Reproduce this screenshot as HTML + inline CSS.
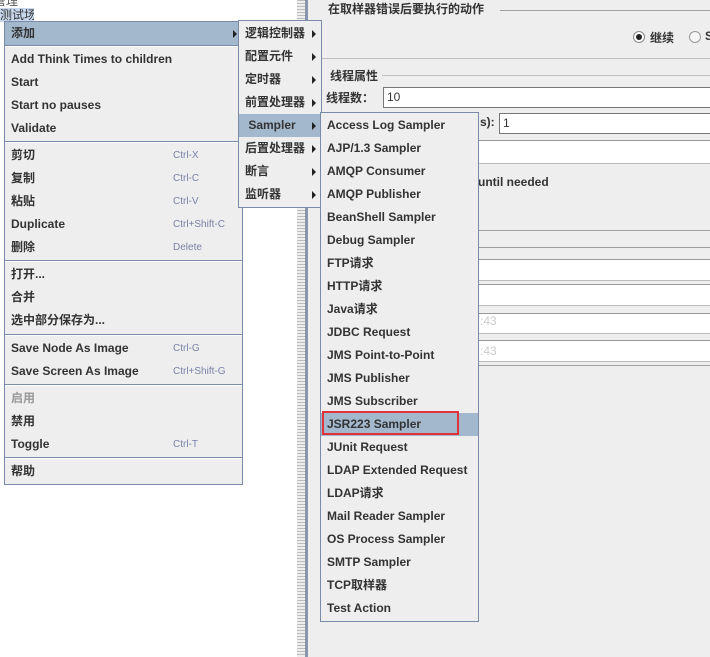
<!DOCTYPE html>
<html><head><meta charset="utf-8"><style>
*{margin:0;padding:0;box-sizing:border-box}
body{width:710px;height:657px;position:relative;overflow:hidden;background:#fff;font-family:"Liberation Sans","Noto Sans CJK SC",sans-serif;font-size:12px;color:#333;font-weight:bold}
.a{position:absolute;white-space:nowrap}
.menu{position:absolute;background:#eeeeee;border:1px solid #7a8aa8}
.it{position:absolute;left:0;right:0;height:23px;line-height:23px;padding-left:6px;white-space:nowrap}
.hl{background:#a3b8cc}
.sc{position:absolute;left:168px;font-weight:normal;font-size:10px;color:#7a82a8}
.sep{position:absolute;left:0;right:0;height:2px;border-top:1px solid #7a8aa8;background:#fff}
.arr{position:absolute;right:5px;top:8px;width:0;height:0;border-left:4px solid #222;border-top:4px solid transparent;border-bottom:4px solid transparent}
.hline{position:absolute;height:1px;background:#a0a0a0}
.box{position:absolute;background:#fff;border-top:1px solid #999;border-bottom:1px solid #bbb}
.dis{color:#999}
</style></head><body>
<div class="a" style="left:-6px;top:-8px;font-weight:normal;color:#555">管理</div>
<div class="a" style="left:0;top:8px;height:14px;width:34px;overflow:hidden;background:#c8d8ec;font-weight:normal;line-height:14px">测试场景</div>
<div class="a" style="left:297px;top:0;width:8px;height:657px;background:repeating-linear-gradient(0deg,#eee 0 2px,#bbb 2px 3px)"></div>
<div class="a" style="left:305px;top:0;width:405px;height:657px;background:#eeeeee;border-left:3px solid #8a96ad"></div>
<div class="a" style="left:328px;top:0;">在取样器错误后要执行的动作</div>
<div class="hline" style="left:500px;top:10px;width:210px"></div>
<div class="a" style="left:633px;top:31px;width:12px;height:12px;border-radius:50%;border:1px solid #888;background:#fff"><div style="margin:2px;width:6px;height:6px;border-radius:50%;background:#222"></div></div>
<div class="a" style="left:650px;top:29px">继续</div>
<div class="a" style="left:689px;top:31px;width:12px;height:12px;border-radius:50%;border:1px solid #999;background:#f6f6f6"></div>
<div class="a" style="left:705px;top:29px">S</div>
<div class="hline" style="left:310px;top:58px;width:400px;background:#c0c0c0"></div>
<div class="a" style="left:330px;top:67px">线程属性</div>
<div class="hline" style="left:382px;top:75px;width:328px;background:#c0c0c0"></div>
<div class="a" style="left:326px;top:89px">线程数：</div>
<div class="a" style="left:383px;top:87px;width:330px;height:21px;background:#fff;border:1px solid #777;font-weight:normal;padding:2px 3px">10</div>
<div class="a" style="left:480px;top:115px">s):</div>
<div class="a" style="left:499px;top:113px;width:215px;height:21px;background:#fff;border:1px solid #777;font-weight:normal;padding:2px 3px">1</div>
<div class="box" style="left:478px;top:140px;width:232px;height:24px"></div>
<div class="a" style="left:478px;top:175px">until needed</div>
<div class="hline" style="left:478px;top:230px;width:232px"></div>
<div class="hline" style="left:478px;top:247px;width:232px"></div>
<div class="box" style="left:478px;top:259px;width:232px;height:22px"></div>
<div class="box" style="left:478px;top:284px;width:232px;height:22px"></div>
<div class="box" style="left:478px;top:313px;width:232px;height:21px;font-weight:normal;color:#ccc;padding-left:2px">:43</div>
<div class="box" style="left:478px;top:340px;width:232px;height:22px;font-weight:normal;color:#ccc;padding-left:2px;line-height:20px">:43</div>
<div class="hline" style="left:478px;top:365px;width:232px"></div>

<div class="menu" style="left:4px;top:21px;width:239px;height:464px">
<div class="it hl" style="top:0">添加<div class="arr"></div></div>
<div class="sep" style="top:23px"></div>
<div class="it" style="top:26px">Add Think Times to children</div>
<div class="it" style="top:49px">Start</div>
<div class="it" style="top:72px">Start no pauses</div>
<div class="it" style="top:95px">Validate</div>
<div class="sep" style="top:119px"></div>
<div class="it" style="top:122px">剪切<span class="sc">Ctrl-X</span></div>
<div class="it" style="top:145px">复制<span class="sc">Ctrl-C</span></div>
<div class="it" style="top:168px">粘贴<span class="sc">Ctrl-V</span></div>
<div class="it" style="top:191px">Duplicate<span class="sc">Ctrl+Shift-C</span></div>
<div class="it" style="top:214px">删除<span class="sc">Delete</span></div>
<div class="sep" style="top:238px"></div>
<div class="it" style="top:241px">打开...</div>
<div class="it" style="top:264px">合并</div>
<div class="it" style="top:287px">选中部分保存为...</div>
<div class="sep" style="top:312px"></div>
<div class="it" style="top:315px">Save Node As Image<span class="sc">Ctrl-G</span></div>
<div class="it" style="top:338px">Save Screen As Image<span class="sc">Ctrl+Shift-G</span></div>
<div class="sep" style="top:362px"></div>
<div class="it dis" style="top:365px">启用</div>
<div class="it" style="top:388px">禁用</div>
<div class="it" style="top:411px">Toggle<span class="sc">Ctrl-T</span></div>
<div class="sep" style="top:435px"></div>
<div class="it" style="top:438px">帮助</div>
</div>

<div class="menu" style="left:238px;top:20px;width:84px;height:188px">
<div class="it" style="top:1px">逻辑控制器<div class="arr"></div></div>
<div class="it" style="top:24px">配置元件<div class="arr"></div></div>
<div class="it" style="top:47px">定时器<div class="arr"></div></div>
<div class="it" style="top:70px">前置处理器<div class="arr"></div></div>
<div class="it hl" style="top:93px">&nbsp;Sampler<div class="arr"></div></div>
<div class="it" style="top:116px">后置处理器<div class="arr"></div></div>
<div class="it" style="top:139px">断言<div class="arr"></div></div>
<div class="it" style="top:162px">监听器<div class="arr"></div></div>
</div>

<div class="menu" style="left:320px;top:112px;width:159px;height:510px">
<div class="it" style="top:1px">Access Log Sampler</div>
<div class="it" style="top:24px">AJP/1.3 Sampler</div>
<div class="it" style="top:47px">AMQP Consumer</div>
<div class="it" style="top:70px">AMQP Publisher</div>
<div class="it" style="top:93px">BeanShell Sampler</div>
<div class="it" style="top:116px">Debug Sampler</div>
<div class="it" style="top:139px">FTP请求</div>
<div class="it" style="top:162px">HTTP请求</div>
<div class="it" style="top:185px">Java请求</div>
<div class="it" style="top:208px">JDBC Request</div>
<div class="it" style="top:231px">JMS Point-to-Point</div>
<div class="it" style="top:254px">JMS Publisher</div>
<div class="it" style="top:277px">JMS Subscriber</div>
<div class="it hl" style="top:300px">JSR223 Sampler</div>
<div class="it" style="top:323px">JUnit Request</div>
<div class="it" style="top:346px">LDAP Extended Request</div>
<div class="it" style="top:369px">LDAP请求</div>
<div class="it" style="top:392px">Mail Reader Sampler</div>
<div class="it" style="top:415px">OS Process Sampler</div>
<div class="it" style="top:438px">SMTP Sampler</div>
<div class="it" style="top:461px">TCP取样器</div>
<div class="it" style="top:484px">Test Action</div>
</div>
<div class="a" style="left:322px;top:411px;width:137px;height:24px;border:2px solid #e0323a"></div>
</body></html>
